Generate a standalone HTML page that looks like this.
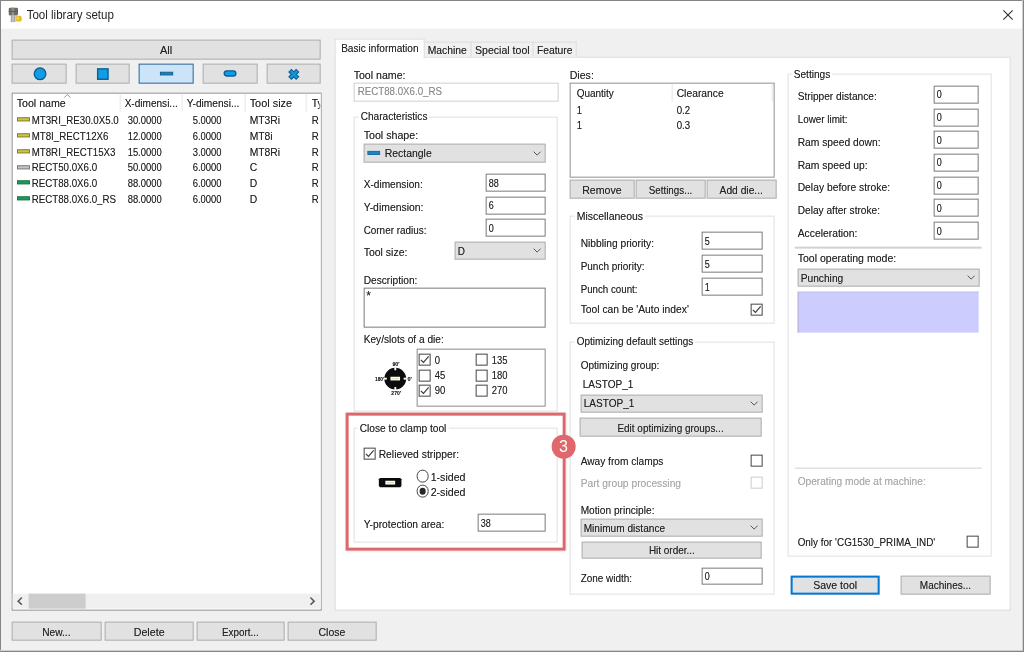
<!DOCTYPE html>
<html lang="en"><head><meta charset="utf-8"><title>Tool library setup</title>
<style>
html,body{margin:0;padding:0;}
body{width:1024px;height:652px;overflow:hidden;background:#f0f0f0;position:relative;font-family:"Liberation Sans",sans-serif;font-size:11px;color:#222;text-shadow:0 0 0.6px rgba(0,0,0,0.4);}
#win{position:absolute;left:0;top:0;width:1024px;height:652px;background:#f0f0f0;overflow:hidden;will-change:transform;transform:translate(-0.35px,-0.35px);}
#win>div,#win>svg,body>div{position:absolute;}
#win{margin:0}
.abs{position:absolute;}
.titlebar{left:0;top:0;width:1024px;height:29px;background:#fff;}
.bd{background:#858585;}
.bd2{background:#cfcfcf;}
.title{font-size:12px;line-height:16px;color:#262626;white-space:nowrap;transform:scaleX(0.962);transform-origin:0 50%;text-shadow:none;}
.t{line-height:14px;height:14px;white-space:nowrap;font-size:11px;transform:scaleX(0.905);transform-origin:0 50%;}
.t.hd{font-size:11.5px;transform:scaleX(0.905);}
.t.row{transform:scaleX(0.875);}
.t.num{transform:scaleX(0.855);}
.t.dis{color:#a9a9a9;text-shadow:0 0 0.6px rgba(160,160,160,0.5);}
.gcov{background:#fff;}
.btn{box-sizing:border-box;background:#e1e1e1;border:1px solid #b0b0b0;text-align:center;}
.btn span{position:absolute;left:0;right:0;top:50%;margin-top:-7px;line-height:14px;font-size:11px;transform:scaleX(0.91);}
.btn.sel{background:#cce4f7;border-color:#2f6694;}
.btn.def{border:2px solid #0078d7;}
.list,.list2{box-sizing:border-box;background:#fff;border:1px solid #8e9096;}
.hsep{background:#e5e5e5;}
.cover{background:#fff;}
.sbar{background:#f0f0f0;}
.sthumb{background:#cdcdcd;}
.tabpanel{box-sizing:border-box;background:#fff;border:1px solid #d9d9d9;}
.tab{box-sizing:border-box;background:#f0f0f0;border:1px solid #dcdcdc;border-bottom:none;}
.tab span,.tab.act span{position:absolute;left:0;right:0;text-align:center;top:50%;margin-top:-7px;line-height:14px;font-size:11px;transform:scaleX(0.91);}
.tab.act{background:#fff;border-bottom:none;}
.tab span{margin-top:-7.5px;}
.tab.act span{margin-top:-8.9px;}
.inp{box-sizing:border-box;background:#fff;border:1px solid #7a7a7a;}
.inp span{position:absolute;left:1.6px;top:50%;margin-top:-7.5px;line-height:14px;transform:scaleX(0.82);transform-origin:0 50%;}
.inp.ro{border-color:#cfcfcf;color:#8c8c8c;text-shadow:0 0 0.6px rgba(140,140,140,0.5);}
.inp.ro span{transform:scaleX(0.885);left:0.4px;margin-top:-8.4px;}
.inp.ta span{transform:none;}
.inp.ro span{left:3px;}
.inp.ta span{top:0px;margin-top:0;left:1.6px;font-size:12px;}
.combo{box-sizing:border-box;background:#e1e1e1;border:1px solid #b0b0b0;}
.combo span{position:absolute;left:2px;top:50%;margin-top:-7.5px;line-height:14px;transform:scaleX(0.905);transform-origin:0 50%;}
.combo .chev{position:absolute;right:3px;top:50%;margin-top:-2.6px;}
.chk{box-sizing:border-box;background:#fff;border:1px solid #444;}
.chk svg{position:absolute;left:-1px;top:-1px;}
.chk.dis{border-color:#cccccc;}
.grp{box-sizing:border-box;border:1px solid #e0e0e0;}
.keybox{box-sizing:border-box;border:1px solid #8a8a8a;background:#fff;}
.radio{box-sizing:border-box;width:12.4px;height:12.4px;border:1px solid #444;border-radius:50%;background:#fff;}
.radio i{position:absolute;left:1.6px;top:1.6px;width:6.8px;height:6.8px;border-radius:50%;background:#2a2a2a;}
.sep{background:#d2d2d2;}
.lav{background:#ccccff;border-left:1px solid #b0b0d4;border-top:1px solid #c0c0e6;box-sizing:border-box;}
.redbox{box-sizing:border-box;border:3.4px solid #d9696c;box-shadow:0 0 2px rgba(120,40,40,0.25);}
.badge{width:23.6px;height:23.6px;border-radius:50%;background:#e0676b;color:#fff;text-align:center;}
.badge span{display:block;text-shadow:none;font-size:16px;line-height:23.6px;}
</style></head>
<body><div id="win">
<div class="titlebar"></div>
<svg class="abs" style="left:8.2px;top:7.1px" width="16.2" height="17.3" viewBox="0 0 15 16">
<rect x="1" y="0.9" width="8.6" height="7.2" rx="1.2" fill="#6c6c67"/>
<rect x="3.6" y="0.9" width="2.4" height="7.2" fill="#8d8d88"/>
<rect x="1" y="3.9" width="8.6" height="0.9" fill="#5a5a56"/>
<rect x="2.9" y="8" width="4.3" height="6.3" fill="#a5a5a1"/>
<rect x="4.2" y="8" width="1.5" height="6.3" fill="#c6c6c2"/>
<rect x="7.4" y="8.5" width="5.6" height="5.2" rx="1.5" fill="#dcbd2e"/>
<rect x="8.2" y="9.2" width="2.4" height="3" rx="1" fill="#ecd955"/>
</svg>
<div class="title" style="left:27.1px;top:7px;">Tool library setup</div>
<svg class="abs" style="left:1002.7px;top:9.8px" width="11" height="11" viewBox="0 0 11 11"><path d="M0.7 0.7 L10 10 M10 0.7 L0.7 10" stroke="#2a2a2a" stroke-width="1.05" fill="none"/></svg>
<div class="btn " style="left:12.0px;top:40.0px;width:309.0px;height:19.5px;"><span style="transform:scaleX(0.9972)">All</span></div>
<div class="btn " style="left:12.0px;top:64.2px;width:54.5px;height:19.6px;"><span></span></div>
<div class="btn " style="left:76.0px;top:64.2px;width:54.0px;height:19.6px;"><span></span></div>
<div class="btn sel" style="left:139.0px;top:64.2px;width:55.0px;height:19.6px;"><span></span></div>
<div class="btn " style="left:203.0px;top:64.2px;width:55.0px;height:19.6px;"><span></span></div>
<div class="btn " style="left:267.0px;top:64.2px;width:54.0px;height:19.6px;"><span></span></div>
<svg class="abs" style="left:32.5px;top:67.2px" width="15" height="15" viewBox="0 0 15 15"><circle cx="7.4" cy="7.2" r="5.8" fill="#109de6" stroke="#0b5f92" stroke-width="1.4"/></svg>
<svg class="abs" style="left:96.3px;top:67.2px" width="15" height="15" viewBox="0 0 15 15"><rect x="2" y="2.2" width="10.4" height="10.4" fill="#109de6" stroke="#0b5f92" stroke-width="1.4"/></svg>
<svg class="abs" style="left:159px;top:70.3px" width="16" height="8" viewBox="0 0 16 8"><rect x="1.8" y="2.6" width="12.2" height="2.7" fill="#1985bf" stroke="#14628f" stroke-width="1"/></svg>
<svg class="abs" style="left:223px;top:69px" width="15" height="10" viewBox="0 0 15 10"><rect x="1.6" y="2.2" width="11.6" height="5.2" rx="2.6" fill="#109de6" stroke="#0b5f92" stroke-width="1.4"/></svg>
<svg class="abs" style="left:286.8px;top:66.6px" width="15.2" height="15.2" viewBox="0 0 14 14"><path d="M2.9 3.4 L10.3 10.8 M10.3 3.4 L2.9 10.8" stroke="#0b5f92" stroke-width="4.3" stroke-linecap="butt" fill="none"/><path d="M3.5 4 L9.7 10.2 M9.7 4 L3.5 10.2" stroke="#1593d6" stroke-width="2.3" stroke-linecap="butt" fill="none"/></svg>
<div class="list" style="left:12.0px;top:92.5px;width:310.0px;height:518.1px;"></div>
<div class="hsep" style="left:120.0px;top:94.0px;width:1.0px;height:18.0px;"></div>
<div class="hsep" style="left:182.0px;top:94.0px;width:1.0px;height:18.0px;"></div>
<div class="hsep" style="left:245.0px;top:94.0px;width:1.0px;height:18.0px;"></div>
<div class="hsep" style="left:306.0px;top:94.0px;width:1.0px;height:18.0px;"></div>
<svg class="abs" style="left:63.6px;top:93.6px" width="8" height="5" viewBox="0 0 8 5"><path d="M0.6 4 L3.7 0.8 L6.8 4" fill="none" stroke="#8a8a8a" stroke-width="0.9"/></svg>
<div class="t hd" style="left:17.4px;top:95.95px;transform:scaleX(0.9253);">Tool name</div>
<div class="t hd" style="left:125px;top:95.95px;transform:scaleX(0.8745);">X-dimensi...</div>
<div class="t hd" style="left:187.4px;top:95.95px;transform:scaleX(0.8851);">Y-dimensi...</div>
<div class="t hd" style="left:249.8px;top:95.95px;transform:scaleX(0.9497);">Tool size</div>
<div class="t hd" style="left:311.8px;top:95.95px;width:9.6px;overflow:hidden;">Ty</div>
<svg class="abs" style="left:16.5px;top:117.0px" width="15" height="6" viewBox="0 0 15 6"><rect x="0.9" y="1.1" width="12" height="3.2" fill="#c9c44a" stroke="#77741c" stroke-width="0.9"/></svg>
<div class="t row" style="left:32.4px;top:112.90px;transform:scaleX(0.885);">MT3RI_RE30.0X5.0</div>
<div class="t row num" style="left:128px;top:112.90px;">30.0000</div>
<div class="t row num" style="left:192.5px;top:112.90px;">5.0000</div>
<div class="t row" style="left:250.2px;top:112.90px;transform:scaleX(0.94);">MT3Ri</div>
<div class="t row" style="left:312px;top:112.90px;">R</div>
<svg class="abs" style="left:16.5px;top:132.9px" width="15" height="6" viewBox="0 0 15 6"><rect x="0.9" y="1.1" width="12" height="3.2" fill="#c9c44a" stroke="#77741c" stroke-width="0.9"/></svg>
<div class="t row" style="left:32.4px;top:128.73px;transform:scaleX(0.885);">MT8I_RECT12X6</div>
<div class="t row num" style="left:128px;top:128.73px;">12.0000</div>
<div class="t row num" style="left:192.5px;top:128.73px;">6.0000</div>
<div class="t row" style="left:250.2px;top:128.73px;transform:scaleX(0.94);">MT8i</div>
<div class="t row" style="left:312px;top:128.73px;">R</div>
<svg class="abs" style="left:16.5px;top:148.7px" width="15" height="6" viewBox="0 0 15 6"><rect x="0.9" y="1.1" width="12" height="3.2" fill="#c9c44a" stroke="#77741c" stroke-width="0.9"/></svg>
<div class="t row" style="left:32.4px;top:144.56px;transform:scaleX(0.885);">MT8RI_RECT15X3</div>
<div class="t row num" style="left:128px;top:144.56px;">15.0000</div>
<div class="t row num" style="left:192.5px;top:144.56px;">3.0000</div>
<div class="t row" style="left:250.2px;top:144.56px;transform:scaleX(0.94);">MT8Ri</div>
<div class="t row" style="left:312px;top:144.56px;">R</div>
<svg class="abs" style="left:16.5px;top:164.5px" width="15" height="6" viewBox="0 0 15 6"><rect x="0.9" y="1.1" width="12" height="3.2" fill="#c4c4c4" stroke="#6e6e6e" stroke-width="0.9"/></svg>
<div class="t row" style="left:32.4px;top:160.39px;transform:scaleX(0.885);">RECT50.0X6.0</div>
<div class="t row num" style="left:128px;top:160.39px;">50.0000</div>
<div class="t row num" style="left:192.5px;top:160.39px;">6.0000</div>
<div class="t row" style="left:250.2px;top:160.39px;transform:scaleX(0.94);">C</div>
<div class="t row" style="left:312px;top:160.39px;">R</div>
<svg class="abs" style="left:16.5px;top:180.4px" width="15" height="6" viewBox="0 0 15 6"><rect x="0.9" y="1.1" width="12" height="3.2" fill="#1f9a5c" stroke="#146c40" stroke-width="0.9"/></svg>
<div class="t row" style="left:32.4px;top:176.22px;transform:scaleX(0.885);">RECT88.0X6.0</div>
<div class="t row num" style="left:128px;top:176.22px;">88.0000</div>
<div class="t row num" style="left:192.5px;top:176.22px;">6.0000</div>
<div class="t row" style="left:250.2px;top:176.22px;transform:scaleX(0.94);">D</div>
<div class="t row" style="left:312px;top:176.22px;">R</div>
<svg class="abs" style="left:16.5px;top:196.2px" width="15" height="6" viewBox="0 0 15 6"><rect x="0.9" y="1.1" width="12" height="3.2" fill="#1f9a5c" stroke="#146c40" stroke-width="0.9"/></svg>
<div class="t row" style="left:32.4px;top:192.05px;transform:scaleX(0.885);">RECT88.0X6.0_RS</div>
<div class="t row num" style="left:128px;top:192.05px;">88.0000</div>
<div class="t row num" style="left:192.5px;top:192.05px;">6.0000</div>
<div class="t row" style="left:250.2px;top:192.05px;transform:scaleX(0.94);">D</div>
<div class="t row" style="left:312px;top:192.05px;">R</div>
<div class="cover" style="left:320.0px;top:93.5px;width:1.0px;height:515.5px;"></div>
<div class="sbar" style="left:13.0px;top:594.0px;width:308.0px;height:15.0px;"></div>
<div class="sthumb" style="left:29.0px;top:594.0px;width:56.5px;height:15.0px;"></div>
<svg class="abs" style="left:17px;top:597px" width="7" height="9" viewBox="0 0 7 9"><path d="M5.2 0.9 L1.5 4.5 L5.2 8.1" fill="none" stroke="#555" stroke-width="1.5"/></svg>
<svg class="abs" style="left:309px;top:597px" width="7" height="9" viewBox="0 0 7 9"><path d="M1.8 0.9 L5.5 4.5 L1.8 8.1" fill="none" stroke="#555" stroke-width="1.5"/></svg>
<div class="btn " style="left:12.0px;top:622.0px;width:89.5px;height:19.0px;"><span style="transform:scaleX(0.9222)">New...</span></div>
<div class="btn " style="left:104.5px;top:622.0px;width:89.0px;height:19.0px;"><span style="transform:scaleX(0.9718)">Delete</span></div>
<div class="btn " style="left:197.0px;top:622.0px;width:87.5px;height:19.0px;"><span style="transform:scaleX(0.8982)">Export...</span></div>
<div class="btn " style="left:288.0px;top:622.0px;width:88.5px;height:19.0px;"><span style="transform:scaleX(0.9564)">Close</span></div>
<div class="tabpanel" style="left:335.0px;top:56.5px;width:675.5px;height:554.5px;"></div>
<div class="tab" style="left:424.4px;top:42.0px;width:47.2px;height:15.0px;"><span style="transform:scaleX(0.9428)">Machine</span></div>
<div class="tab" style="left:470.6px;top:42.0px;width:63.4px;height:15.0px;"><span style="transform:scaleX(0.9582)">Special tool</span></div>
<div class="tab" style="left:533.0px;top:42.0px;width:44.0px;height:15.0px;"><span style="transform:scaleX(0.9361)">Feature</span></div>
<div class="tab act" style="left:335.0px;top:39.0px;width:90.4px;height:20.0px;"><span style="transform:scaleX(0.9173)">Basic information</span></div>
<div class="t " style="left:353.9px;top:67.65px;transform:scaleX(0.9645);">Tool name:</div>
<div class="inp ro" style="left:353.5px;top:83.0px;width:205.5px;height:19.0px;"><span>RECT88.0X6.0_RS</span></div>
<div class="grp" style="left:354.0px;top:116.5px;width:204.4px;height:295.0px;"></div>
<div class="gcov" style="left:359.0px;top:115.5px;width:70.3px;height:3.0px;"></div>
<div class="t" style="left:361px;top:109.1px;transform:scaleX(0.9182);">Characteristics</div>
<div class="t " style="left:364.4px;top:128.35px;transform:scaleX(0.9686);">Tool shape:</div>
<div class="combo" style="left:364.0px;top:143.7px;width:181.6px;height:19.1px;"><span></span><svg class="chev" width="9" height="6" viewBox="0 0 9 6"><path d="M1 1 L4.5 4.5 L8 1" fill="none" stroke="#555" stroke-width="1"/></svg></div>
<svg class="abs" style="left:367px;top:150px" width="15" height="7" viewBox="0 0 15 7"><rect x="1.2" y="1.7" width="11.8" height="3.2" fill="#1887c4" stroke="#14699a" stroke-width="0.9"/></svg>
<div class="t " style="left:384.7px;top:146.35px;transform:scaleX(0.9506);">Rectangle</div>
<div class="t " style="left:364.1px;top:177.15px;transform:scaleX(0.9205);">X-dimension:</div>
<div class="inp " style="left:486.0px;top:174.0px;width:59.6px;height:18.0px;"><span>88</span></div>
<div class="t " style="left:364.1px;top:199.85px;transform:scaleX(0.9464);">Y-dimension:</div>
<div class="inp " style="left:486.0px;top:196.7px;width:59.6px;height:18.0px;"><span>6</span></div>
<div class="t " style="left:364.3px;top:222.65px;transform:scaleX(0.901);">Corner radius:</div>
<div class="inp " style="left:486.0px;top:219.4px;width:59.6px;height:18.0px;"><span>0</span></div>
<div class="t " style="left:364.4px;top:245.35px;transform:scaleX(0.9551);">Tool size:</div>
<div class="combo" style="left:455.0px;top:242.0px;width:90.6px;height:18.0px;"><span>D</span><svg class="chev" width="9" height="6" viewBox="0 0 9 6"><path d="M1 1 L4.5 4.5 L8 1" fill="none" stroke="#555" stroke-width="1"/></svg></div>
<div class="t " style="left:364.3px;top:272.65px;transform:scaleX(0.9263);">Description:</div>
<div class="inp ta" style="left:364.0px;top:288.4px;width:181.6px;height:39.6px;"><span>*</span></div>
<div class="t " style="left:364.3px;top:331.65px;transform:scaleX(0.9225);">Key/slots of a die:</div>
<div class="keybox" style="left:417.0px;top:349.0px;width:128.6px;height:57.6px;"></div>
<div class="chk" style="left:419.3px;top:354.2px;width:12.0px;height:12.0px;"><svg width="12" height="12" viewBox="0 0 12 12"><path d="M2.2 6.2 L4.8 8.8 L10 2.8" fill="none" stroke="#3a3a3a" stroke-width="1.15"/></svg></div>
<div class="t " style="left:435px;top:352.65px;transform:scaleX(0.86);">0</div>
<div class="chk" style="left:475.9px;top:354.2px;width:12.0px;height:12.0px;"></div>
<div class="t " style="left:491.5px;top:352.65px;transform:scaleX(0.86);">135</div>
<div class="chk" style="left:419.3px;top:369.5px;width:12.0px;height:12.0px;"></div>
<div class="t " style="left:435px;top:367.85px;transform:scaleX(0.86);">45</div>
<div class="chk" style="left:475.9px;top:369.5px;width:12.0px;height:12.0px;"></div>
<div class="t " style="left:491.5px;top:367.85px;transform:scaleX(0.86);">180</div>
<div class="chk" style="left:419.3px;top:384.6px;width:12.0px;height:12.0px;"><svg width="12" height="12" viewBox="0 0 12 12"><path d="M2.2 6.2 L4.8 8.8 L10 2.8" fill="none" stroke="#3a3a3a" stroke-width="1.15"/></svg></div>
<div class="t " style="left:435px;top:382.95px;transform:scaleX(0.86);">90</div>
<div class="chk" style="left:475.9px;top:384.6px;width:12.0px;height:12.0px;"></div>
<div class="t " style="left:491.5px;top:382.95px;transform:scaleX(0.86);">270</div>
<svg class="abs" style="left:365.4px;top:350.2px" width="60" height="60" viewBox="0 0 60 60">
<circle cx="30.6" cy="29" r="10.9" fill="#0c0c0c"/>
<rect x="29.7" y="17.6" width="1.9" height="3" fill="#fff"/><rect x="29.7" y="37.4" width="1.9" height="3" fill="#fff"/>
<rect x="19.2" y="28.05" width="3" height="1.9" fill="#fff"/><rect x="39" y="28.05" width="3" height="1.9" fill="#fff"/>
<rect x="25.8" y="27.1" width="9.6" height="3.7" fill="#fff"/><rect x="26.8" y="28.2" width="7.6" height="1.5" fill="#e6e2b8"/>
<text x="31.3" y="16.5" font-family="Liberation Sans, sans-serif" font-size="5.6" font-weight="bold" text-anchor="middle" fill="#1a1a1a" textLength="7" lengthAdjust="spacingAndGlyphs">90'</text>
<text x="14.9" y="31" font-family="Liberation Sans, sans-serif" font-size="5.6" font-weight="bold" text-anchor="middle" fill="#1a1a1a" textLength="9" lengthAdjust="spacingAndGlyphs">180'</text>
<text x="45" y="31" font-family="Liberation Sans, sans-serif" font-size="5.6" font-weight="bold" text-anchor="middle" fill="#1a1a1a" textLength="4.4" lengthAdjust="spacingAndGlyphs">0'</text>
<text x="31.5" y="45" font-family="Liberation Sans, sans-serif" font-size="5.6" font-weight="bold" text-anchor="middle" fill="#1a1a1a" textLength="9.6" lengthAdjust="spacingAndGlyphs">270'</text>
</svg>
<div class="grp" style="left:354.0px;top:428.2px;width:204.4px;height:115.3px;"></div>
<div class="gcov" style="left:358.4px;top:427.2px;width:90.2px;height:3.0px;"></div>
<div class="t" style="left:360.4px;top:420.8px;transform:scaleX(0.9268);">Close to clamp tool</div>
<div class="chk" style="left:364.3px;top:447.6px;width:12.0px;height:12.0px;"><svg width="12" height="12" viewBox="0 0 12 12"><path d="M2.2 6.2 L4.8 8.8 L10 2.8" fill="none" stroke="#3a3a3a" stroke-width="1.15"/></svg></div>
<div class="t " style="left:378.8px;top:446.75px;transform:scaleX(0.9393);">Relieved stripper:</div>
<svg class="abs" style="left:378px;top:476.3px" width="26" height="14" viewBox="0 0 26 14">
<path d="M2.4 2.4 H22.6 L23.8 3.6 V10.4 L22.6 11.6 H2.4 L1.2 10.4 V3.6 Z" fill="#0a0a0a"/>
<rect x="7.7" y="5.1" width="9.8" height="3.8" fill="#fff"/><rect x="8.7" y="6.2" width="7.8" height="1.6" fill="#e6e2b8"/></svg>
<div class="radio" style="left:417px;top:470.3px"></div>
<div class="radio" style="left:417px;top:485.4px"><i></i></div>
<div class="t " style="left:431.4px;top:469.85px;transform:scaleX(0.9646);">1-sided</div>
<div class="t " style="left:431.4px;top:484.85px;transform:scaleX(0.9646);">2-sided</div>
<div class="t " style="left:364.1px;top:516.65px;transform:scaleX(0.9336);">Y-protection area:</div>
<div class="inp " style="left:478.0px;top:514.4px;width:67.6px;height:18.0px;"><span>38</span></div>
<div class="t " style="left:570px;top:67.65px;transform:scaleX(0.9656);">Dies:</div>
<div class="list2" style="left:570.0px;top:83.0px;width:205.0px;height:95.0px;"></div>
<div class="hsep" style="left:672.0px;top:84.0px;width:1.0px;height:18.0px;"></div>
<div class="hsep" style="left:772.0px;top:84.0px;width:1.0px;height:18.0px;"></div>
<div class="t hd" style="left:576.7px;top:86.15px;transform:scaleX(0.8686);">Quantity</div>
<div class="t hd" style="left:677px;top:86.15px;transform:scaleX(0.8985);">Clearance</div>
<div class="t row" style="left:576.5px;top:102.95px;">1</div>
<div class="t row" style="left:676.8px;top:102.95px;">0.2</div>
<div class="t row" style="left:576.5px;top:118.25px;">1</div>
<div class="t row" style="left:676.8px;top:118.25px;">0.3</div>
<div class="btn " style="left:570.0px;top:180.4px;width:64.6px;height:19.0px;"><span style="transform:scaleX(0.9641)">Remove</span></div>
<div class="btn " style="left:636.2px;top:180.4px;width:69.8px;height:19.0px;"><span style="transform:scaleX(0.8912)">Settings...</span></div>
<div class="btn " style="left:707.4px;top:180.4px;width:69.2px;height:19.0px;"><span style="transform:scaleX(0.9336)">Add die...</span></div>
<div class="grp" style="left:570.2px;top:216.4px;width:204.8px;height:107.2px;"></div>
<div class="gcov" style="left:575.0px;top:215.4px;width:69.9px;height:3.0px;"></div>
<div class="t" style="left:577px;top:209.0px;transform:scaleX(0.9526);">Miscellaneous</div>
<div class="t " style="left:580.6px;top:236.25px;transform:scaleX(0.9306);">Nibbling priority:</div>
<div class="inp " style="left:702.0px;top:232.4px;width:60.7px;height:18.0px;"><span>5</span></div>
<div class="t " style="left:580.6px;top:258.95px;transform:scaleX(0.9074);">Punch priority:</div>
<div class="inp " style="left:702.0px;top:255.3px;width:60.7px;height:18.0px;"><span>5</span></div>
<div class="t " style="left:580.6px;top:281.65px;transform:scaleX(0.8845);">Punch count:</div>
<div class="inp " style="left:702.0px;top:278.0px;width:60.7px;height:18.0px;"><span>1</span></div>
<div class="t " style="left:580.8px;top:302.45px;transform:scaleX(0.9377);">Tool can be 'Auto index'</div>
<div class="chk" style="left:750.9px;top:303.7px;width:12.0px;height:12.0px;"><svg width="12" height="12" viewBox="0 0 12 12"><path d="M2.2 6.2 L4.8 8.8 L10 2.8" fill="none" stroke="#3a3a3a" stroke-width="1.15"/></svg></div>
<div class="grp" style="left:570.2px;top:341.8px;width:204.8px;height:252.8px;"></div>
<div class="gcov" style="left:575.3px;top:340.8px;width:120.1px;height:3.0px;"></div>
<div class="t" style="left:577.3px;top:334.4px;transform:scaleX(0.9038);">Optimizing default settings</div>
<div class="t " style="left:580.6px;top:357.95px;transform:scaleX(0.9128);">Optimizing group:</div>
<div class="t " style="left:583.3px;top:377.25px;transform:scaleX(0.9161);">LASTOP_1</div>
<div class="combo" style="left:580.6px;top:394.5px;width:182.1px;height:18.1px;"><span style="transform:scaleX(0.9161)">LASTOP_1</span><svg class="chev" width="9" height="6" viewBox="0 0 9 6"><path d="M1 1 L4.5 4.5 L8 1" fill="none" stroke="#555" stroke-width="1"/></svg></div>
<div class="btn " style="left:580.2px;top:418.2px;width:181.8px;height:19.3px;"><span style="transform:scaleX(0.9047)">Edit optimizing groups...</span></div>
<div class="t " style="left:580.6px;top:454.25px;transform:scaleX(0.9224);">Away from clamps</div>
<div class="chk" style="left:750.9px;top:455.3px;width:12.0px;height:12.0px;"></div>
<div class="t dis" style="left:580.8px;top:475.65px;transform:scaleX(0.9329);">Part group processing</div>
<div class="chk dis" style="left:750.9px;top:476.8px;width:12.0px;height:12.0px;"></div>
<div class="t " style="left:580.6px;top:502.85px;transform:scaleX(0.9214);">Motion principle:</div>
<div class="combo" style="left:580.6px;top:519.0px;width:182.1px;height:18.0px;"><span style="transform:scaleX(0.9183)">Minimum distance</span><svg class="chev" width="9" height="6" viewBox="0 0 9 6"><path d="M1 1 L4.5 4.5 L8 1" fill="none" stroke="#555" stroke-width="1"/></svg></div>
<div class="btn " style="left:581.6px;top:542.0px;width:180.4px;height:16.8px;"><span style="transform:scaleX(0.9044)">Hit order...</span></div>
<div class="t " style="left:580.6px;top:570.85px;transform:scaleX(0.9055);">Zone width:</div>
<div class="inp " style="left:702.0px;top:567.5px;width:60.7px;height:17.7px;"><span>0</span></div>
<div class="grp" style="left:788.0px;top:74.2px;width:204.0px;height:482.8px;"></div>
<div class="gcov" style="left:791.7px;top:73.2px;width:40.2px;height:3.0px;"></div>
<div class="t" style="left:793.7px;top:66.8px;transform:scaleX(0.9233);">Settings</div>
<div class="t " style="left:797.5px;top:89.35px;transform:scaleX(0.924);">Stripper distance:</div>
<div class="inp " style="left:934.0px;top:85.7px;width:45.3px;height:18.0px;"><span>0</span></div>
<div class="t " style="left:797.5px;top:112.10px;transform:scaleX(0.8971);">Lower limit:</div>
<div class="inp " style="left:934.0px;top:108.5px;width:45.3px;height:18.0px;"><span>0</span></div>
<div class="t " style="left:797.5px;top:134.85px;transform:scaleX(0.9349);">Ram speed down:</div>
<div class="inp " style="left:934.0px;top:131.2px;width:45.3px;height:18.0px;"><span>0</span></div>
<div class="t " style="left:797.5px;top:157.60px;transform:scaleX(0.9382);">Ram speed up:</div>
<div class="inp " style="left:934.0px;top:153.9px;width:45.3px;height:18.0px;"><span>0</span></div>
<div class="t " style="left:797.5px;top:180.35px;transform:scaleX(0.9387);">Delay before stroke:</div>
<div class="inp " style="left:934.0px;top:176.7px;width:45.3px;height:18.0px;"><span>0</span></div>
<div class="t " style="left:797.5px;top:203.10px;transform:scaleX(0.9231);">Delay after stroke:</div>
<div class="inp " style="left:934.0px;top:199.4px;width:45.3px;height:18.0px;"><span>0</span></div>
<div class="t " style="left:797.5px;top:225.85px;transform:scaleX(0.9403);">Acceleration:</div>
<div class="inp " style="left:934.0px;top:222.2px;width:45.3px;height:18.0px;"><span>0</span></div>
<div class="sep" style="left:794.5px;top:247.3px;width:187.2px;height:1.7px;"></div>
<div class="t " style="left:797.5px;top:251.35px;transform:scaleX(0.9598);">Tool operating mode:</div>
<div class="combo" style="left:797.8px;top:269.0px;width:182.0px;height:18.0px;"><span style="transform:scaleX(0.9286)">Punching</span><svg class="chev" width="9" height="6" viewBox="0 0 9 6"><path d="M1 1 L4.5 4.5 L8 1" fill="none" stroke="#555" stroke-width="1"/></svg></div>
<div class="lav" style="left:798.0px;top:291.8px;width:181.3px;height:41.4px;"></div>
<div class="sep" style="left:794.5px;top:467.6px;width:187.2px;height:1.8px;"></div>
<div class="t dis" style="left:797.5px;top:474.35px;transform:scaleX(0.9228);">Operating mode at machine:</div>
<div class="t " style="left:797.5px;top:534.85px;transform:scaleX(0.9007);">Only for 'CG1530_PRIMA_IND'</div>
<div class="chk" style="left:967.3px;top:535.6px;width:12.0px;height:12.0px;"></div>
<div class="btn def" style="left:791.0px;top:576.0px;width:89.0px;height:18.8px;"><span style="transform:scaleX(0.9569)">Save tool</span></div>
<div class="btn " style="left:901.2px;top:576.0px;width:89.6px;height:18.8px;"><span style="transform:scaleX(0.912)">Machines...</span></div>
<div class="redbox" style="left:345.8px;top:413.2px;width:220.3px;height:137.6px;"></div>
<div class="badge" style="left:552px;top:435.4px;"><span>3</span></div>
</div>
<div class="bd" style="left:0.0px;top:0.0px;width:1024.0px;height:1.0px;"></div>
<div class="bd" style="left:0.0px;top:0.0px;width:1.0px;height:652.0px;"></div>
<div class="bd2" style="left:1022.0px;top:0.0px;width:1.0px;height:652.0px;"></div>
<div class="bd2" style="left:0.0px;top:650.0px;width:1024.0px;height:1.0px;"></div>
<div class="bd" style="left:1023.0px;top:0.0px;width:1.0px;height:652.0px;"></div>
<div class="bd" style="left:0.0px;top:651.0px;width:1024.0px;height:1.0px;"></div>
</body></html>
